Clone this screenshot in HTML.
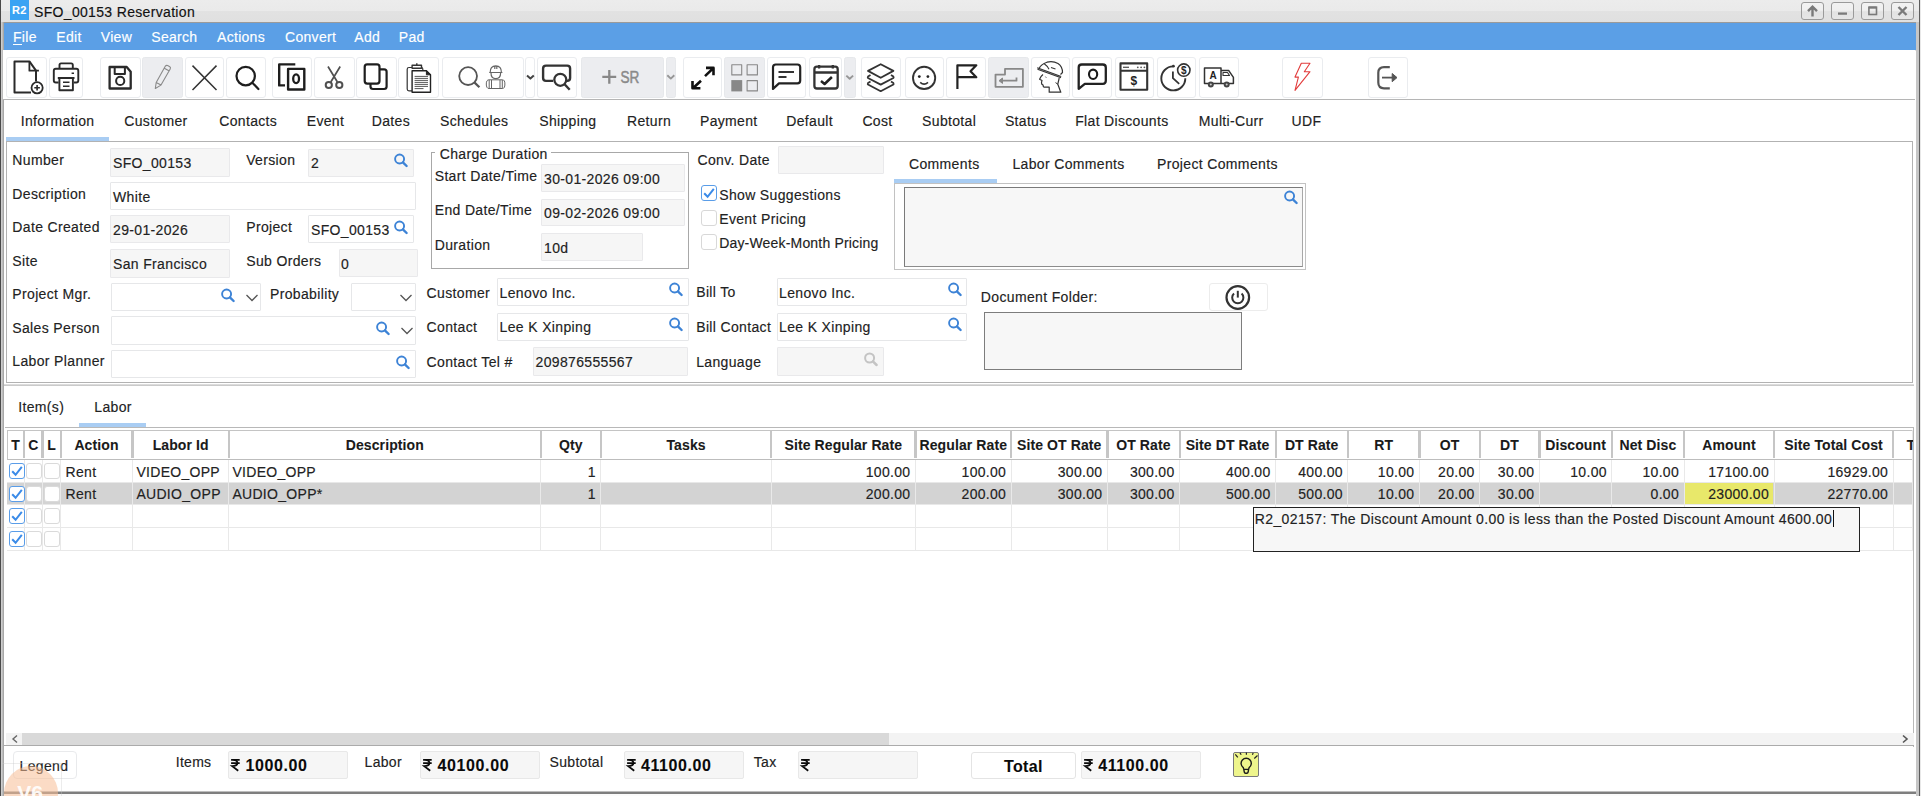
<!DOCTYPE html><html><head><meta charset="utf-8"><style>
html,body{margin:0;padding:0;width:1921px;height:796px;overflow:hidden;background:#fff}
body{position:relative;font-family:"Liberation Sans",sans-serif}
body>div{position:absolute}
.t{white-space:nowrap;-webkit-text-stroke:0.15px currentColor}
</style></head><body>
<div style="left:0px;top:0px;width:1921px;height:22px;background:linear-gradient(#ececec 0%,#eaeaea 50%,#e2e2e2 50%,#e0e0e0 100%)"></div>
<div style="left:10px;top:0px;width:19px;height:20px;background:#3aa3f3"></div>
<div class="t" style="left:12px;top:4.19px;font-size:11px;line-height:13px;font-weight:bold;color:#fff;letter-spacing:0.2px;;-webkit-text-stroke:0.08px currentColor">R2</div>
<div class="t" style="left:34px;top:4.15px;font-size:14px;line-height:16px;font-weight:normal;color:#111;letter-spacing:0.33px;">SFO_00153 Reservation</div>
<div style="left:1801px;top:2px;width:23px;height:17.5px;background:linear-gradient(#f2f2f2,#f0f0f0 45%,#e2e2e2 55%,#e6e6e6);border:1.5px solid #9a9a9a;border-radius:3px;box-sizing:border-box"></div>
<div style="left:1831px;top:2px;width:23px;height:17.5px;background:linear-gradient(#f2f2f2,#f0f0f0 45%,#e2e2e2 55%,#e6e6e6);border:1.5px solid #9a9a9a;border-radius:3px;box-sizing:border-box"></div>
<div style="left:1861px;top:2px;width:23px;height:17.5px;background:linear-gradient(#f2f2f2,#f0f0f0 45%,#e2e2e2 55%,#e6e6e6);border:1.5px solid #9a9a9a;border-radius:3px;box-sizing:border-box"></div>
<div style="left:1891px;top:2px;width:23px;height:17.5px;background:linear-gradient(#f2f2f2,#f0f0f0 45%,#e2e2e2 55%,#e6e6e6);border:1.5px solid #9a9a9a;border-radius:3px;box-sizing:border-box"></div>
<svg style="position:absolute;left:1801px;top:2px;overflow:visible" width="23" height="18" viewBox="0 0 23 18"><path d="M11.5 14.5 V5 M7 9.2 L11.5 4.6 L16 9.2" fill="none" stroke="#7a7a7a" stroke-width="2.4"/></svg>
<svg style="position:absolute;left:1831px;top:2px;overflow:visible" width="23" height="18" viewBox="0 0 23 18"><line x1="7" y1="11.6" x2="16" y2="11.6" stroke="#7a7a7a" stroke-width="2.3"/></svg>
<svg style="position:absolute;left:1861px;top:2px;overflow:visible" width="23" height="18" viewBox="0 0 23 18"><rect x="7.9" y="5.2" width="7.6" height="7.3" fill="none" stroke="#7a7a7a" stroke-width="1.6"/><line x1="7.9" y1="5.6" x2="15.5" y2="5.6" stroke="#7a7a7a" stroke-width="2.2"/></svg>
<svg style="position:absolute;left:1891px;top:2px;overflow:visible" width="23" height="18" viewBox="0 0 23 18"><path d="M7.5 5 L15.5 13 M15.5 5 L7.5 13" stroke="#7a7a7a" stroke-width="2.4"/></svg>
<div style="left:0px;top:0px;width:1px;height:796px;background:#4a4a4a"></div>
<div style="left:1px;top:22px;width:1px;height:774px;background:#cdcdcd"></div>
<div style="left:2px;top:22px;width:1px;height:774px;background:#bdbdbd"></div>
<div style="left:3px;top:22px;width:1px;height:774px;background:#a8a8a8"></div>
<div style="left:1916px;top:22px;width:3px;height:774px;background:#c6c6c6"></div>
<div style="left:1919px;top:0px;width:1px;height:796px;background:#5c5c5c"></div>
<div style="left:1920px;top:0px;width:1px;height:796px;background:#e8e8e8"></div>
<div style="left:4px;top:22px;width:1912px;height:1px;background:#9a9a9a"></div>
<div style="left:4px;top:23px;width:1912px;height:27px;background:#5b9fe6"></div>
<div style="left:3.9px;top:50px;width:1912.1999999999998px;height:1px;background:#e6e2de"></div>
<div class="t" style="left:13px;top:29.05px;font-size:14px;line-height:16px;font-weight:normal;color:#fff;letter-spacing:0.3px;">File</div>
<div class="t" style="left:56.25px;top:29.05px;font-size:14px;line-height:16px;font-weight:normal;color:#fff;letter-spacing:0.3px;">Edit</div>
<div class="t" style="left:100.75px;top:29.05px;font-size:14px;line-height:16px;font-weight:normal;color:#fff;letter-spacing:0.3px;">View</div>
<div class="t" style="left:151.25px;top:29.05px;font-size:14px;line-height:16px;font-weight:normal;color:#fff;letter-spacing:0.3px;">Search</div>
<div class="t" style="left:217px;top:29.05px;font-size:14px;line-height:16px;font-weight:normal;color:#fff;letter-spacing:0.3px;">Actions</div>
<div class="t" style="left:285px;top:29.05px;font-size:14px;line-height:16px;font-weight:normal;color:#fff;letter-spacing:0.3px;">Convert</div>
<div class="t" style="left:354.25px;top:29.05px;font-size:14px;line-height:16px;font-weight:normal;color:#fff;letter-spacing:0.3px;">Add</div>
<div class="t" style="left:398.75px;top:29.05px;font-size:14px;line-height:16px;font-weight:normal;color:#fff;letter-spacing:0.3px;">Pad</div>
<div style="left:12.9px;top:43.9px;width:8.999999999999998px;height:1.2000000000000028px;background:#fff"></div>
<div style="left:3px;top:50px;width:1912px;height:50px;background:#fff;border-bottom:1.5px solid #b5b5b5;box-sizing:border-box"></div>
<div class="t" style="left:20.75px;top:112.75px;font-size:14px;line-height:16px;font-weight:normal;color:#222;letter-spacing:0.33px;">Information</div>
<div class="t" style="left:124.25px;top:112.75px;font-size:14px;line-height:16px;font-weight:normal;color:#222;letter-spacing:0.33px;">Customer</div>
<div class="t" style="left:219.25px;top:112.75px;font-size:14px;line-height:16px;font-weight:normal;color:#222;letter-spacing:0.33px;">Contacts</div>
<div class="t" style="left:306.75px;top:112.75px;font-size:14px;line-height:16px;font-weight:normal;color:#222;letter-spacing:0.33px;">Event</div>
<div class="t" style="left:371.75px;top:112.75px;font-size:14px;line-height:16px;font-weight:normal;color:#222;letter-spacing:0.33px;">Dates</div>
<div class="t" style="left:440px;top:112.75px;font-size:14px;line-height:16px;font-weight:normal;color:#222;letter-spacing:0.33px;">Schedules</div>
<div class="t" style="left:539.25px;top:112.75px;font-size:14px;line-height:16px;font-weight:normal;color:#222;letter-spacing:0.33px;">Shipping</div>
<div class="t" style="left:627px;top:112.75px;font-size:14px;line-height:16px;font-weight:normal;color:#222;letter-spacing:0.33px;">Return</div>
<div class="t" style="left:700px;top:112.75px;font-size:14px;line-height:16px;font-weight:normal;color:#222;letter-spacing:0.33px;">Payment</div>
<div class="t" style="left:786.25px;top:112.75px;font-size:14px;line-height:16px;font-weight:normal;color:#222;letter-spacing:0.33px;">Default</div>
<div class="t" style="left:862.4px;top:112.75px;font-size:14px;line-height:16px;font-weight:normal;color:#222;letter-spacing:0.33px;">Cost</div>
<div class="t" style="left:922.1px;top:112.75px;font-size:14px;line-height:16px;font-weight:normal;color:#222;letter-spacing:0.33px;">Subtotal</div>
<div class="t" style="left:1004.9px;top:112.75px;font-size:14px;line-height:16px;font-weight:normal;color:#222;letter-spacing:0.33px;">Status</div>
<div class="t" style="left:1075.2px;top:112.75px;font-size:14px;line-height:16px;font-weight:normal;color:#222;letter-spacing:0.33px;">Flat Discounts</div>
<div class="t" style="left:1198.8px;top:112.75px;font-size:14px;line-height:16px;font-weight:normal;color:#222;letter-spacing:0.33px;">Multi-Curr</div>
<div class="t" style="left:1291.5px;top:112.75px;font-size:14px;line-height:16px;font-weight:normal;color:#222;letter-spacing:0.33px;">UDF</div>
<div style="left:6px;top:137px;width:103px;height:4px;background:#a9cdf3"></div>
<div style="left:6px;top:141px;width:1907px;height:242px;border:1.2px solid #b2b2b2;box-sizing:border-box"></div>
<div style="left:3.9px;top:384.3px;width:1910.1px;height:1.5px;background:linear-gradient(#e4e4e4,#c2c2c2)"></div>
<div class="t" style="left:12.3px;top:152.15px;font-size:14px;line-height:16px;font-weight:normal;color:#222;letter-spacing:0.35px;">Number</div>
<div class="t" style="left:12.3px;top:185.65px;font-size:14px;line-height:16px;font-weight:normal;color:#222;letter-spacing:0.35px;">Description</div>
<div class="t" style="left:12.3px;top:219.15px;font-size:14px;line-height:16px;font-weight:normal;color:#222;letter-spacing:0.35px;">Date Created</div>
<div class="t" style="left:12.3px;top:252.65px;font-size:14px;line-height:16px;font-weight:normal;color:#222;letter-spacing:0.35px;">Site</div>
<div class="t" style="left:12.3px;top:286.35px;font-size:14px;line-height:16px;font-weight:normal;color:#222;letter-spacing:0.35px;">Project Mgr.</div>
<div class="t" style="left:12.3px;top:320.15px;font-size:14px;line-height:16px;font-weight:normal;color:#222;letter-spacing:0.35px;">Sales Person</div>
<div class="t" style="left:12.3px;top:353.45px;font-size:14px;line-height:16px;font-weight:normal;color:#222;letter-spacing:0.35px;">Labor Planner</div>
<div style="left:110.4px;top:148px;width:119.4px;height:29px;background:#f6f6f6;border:1px solid #e9e9eb;border-radius:1px;box-sizing:border-box"></div>
<div class="t" style="left:113px;top:155.35px;font-size:14px;line-height:16px;font-weight:normal;color:#222;letter-spacing:0.35px;">SFO_00153</div>
<div class="t" style="left:246.2px;top:152.15px;font-size:14px;line-height:16px;font-weight:normal;color:#222;letter-spacing:0.35px;">Version</div>
<div style="left:308.3px;top:148.5px;width:105.5px;height:28.0px;background:#f6f6f6;border:1px solid #e9e9eb;border-radius:1px;box-sizing:border-box"></div>
<div class="t" style="left:311px;top:155.35px;font-size:14px;line-height:16px;font-weight:normal;color:#222;letter-spacing:0.35px;">2</div>
<svg style="position:absolute;left:394px;top:153.5px;overflow:visible" width="14" height="14" viewBox="0 0 14 14"><circle cx="5.6" cy="5.0" r="4.5" fill="none" stroke="#3d83d6" stroke-width="1.9"/><line x1="8.9" y1="8.4" x2="12.6" y2="12.0" stroke="#3d83d6" stroke-width="2.4" stroke-linecap="round"/></svg>
<div style="left:110.4px;top:182.2px;width:305.29999999999995px;height:27.80000000000001px;background:#fff;border:1px solid #e6e7e9;border-radius:1px;box-sizing:border-box"></div>
<div class="t" style="left:113px;top:188.75px;font-size:14px;line-height:16px;font-weight:normal;color:#222;letter-spacing:0.35px;">White</div>
<div style="left:110.4px;top:215.3px;width:119.4px;height:28.099999999999994px;background:#f6f6f6;border:1px solid #e9e9eb;border-radius:1px;box-sizing:border-box"></div>
<div class="t" style="left:113px;top:222.15px;font-size:14px;line-height:16px;font-weight:normal;color:#222;letter-spacing:0.35px;">29-01-2026</div>
<div class="t" style="left:246.2px;top:219.15px;font-size:14px;line-height:16px;font-weight:normal;color:#222;letter-spacing:0.35px;">Project</div>
<div style="left:308.3px;top:215.4px;width:105.5px;height:27.799999999999983px;background:#fff;border:1px solid #e6e7e9;border-radius:1px;box-sizing:border-box"></div>
<div class="t" style="left:311px;top:222.15px;font-size:14px;line-height:16px;font-weight:normal;color:#222;letter-spacing:0.35px;">SFO_00153</div>
<svg style="position:absolute;left:394px;top:220.5px;overflow:visible" width="14" height="14" viewBox="0 0 14 14"><circle cx="5.6" cy="5.0" r="4.5" fill="none" stroke="#3d83d6" stroke-width="1.9"/><line x1="8.9" y1="8.4" x2="12.6" y2="12.0" stroke="#3d83d6" stroke-width="2.4" stroke-linecap="round"/></svg>
<div style="left:110.4px;top:249px;width:119.4px;height:28.5px;background:#f6f6f6;border:1px solid #e9e9eb;border-radius:1px;box-sizing:border-box"></div>
<div class="t" style="left:113px;top:255.85px;font-size:14px;line-height:16px;font-weight:normal;color:#222;letter-spacing:0.35px;">San Francisco</div>
<div class="t" style="left:246.2px;top:252.65px;font-size:14px;line-height:16px;font-weight:normal;color:#222;letter-spacing:0.35px;">Sub Orders</div>
<div style="left:338.5px;top:249.3px;width:79.10000000000002px;height:27.899999999999977px;background:#f6f6f6;border:1px solid #e9e9eb;border-radius:1px;box-sizing:border-box"></div>
<div class="t" style="left:341px;top:255.85px;font-size:14px;line-height:16px;font-weight:normal;color:#222;letter-spacing:0.35px;">0</div>
<div style="left:110.6px;top:282.7px;width:150.4px;height:28.0px;background:#fff;border:1px solid #e6e7e9;border-radius:1px;box-sizing:border-box"></div>
<svg style="position:absolute;left:221px;top:288.5px;overflow:visible" width="14" height="14" viewBox="0 0 14 14"><circle cx="5.6" cy="5.0" r="4.5" fill="none" stroke="#3d83d6" stroke-width="1.9"/><line x1="8.9" y1="8.4" x2="12.6" y2="12.0" stroke="#3d83d6" stroke-width="2.4" stroke-linecap="round"/></svg>
<svg style="position:absolute;left:246px;top:293.5px;overflow:visible" width="12" height="8" viewBox="0 0 12 8"><polyline points="0.5,1 6,6.5 11.5,1" fill="none" stroke="#555" stroke-width="1.3"/></svg>
<div class="t" style="left:270px;top:286.35px;font-size:14px;line-height:16px;font-weight:normal;color:#222;letter-spacing:0.35px;">Probability</div>
<div style="left:350.9px;top:282.7px;width:64.90000000000003px;height:28.0px;background:#fff;border:1px solid #e6e7e9;border-radius:1px;box-sizing:border-box"></div>
<svg style="position:absolute;left:400px;top:293.5px;overflow:visible" width="12" height="8" viewBox="0 0 12 8"><polyline points="0.5,1 6,6.5 11.5,1" fill="none" stroke="#555" stroke-width="1.3"/></svg>
<div style="left:110.6px;top:316.2px;width:305.20000000000005px;height:28.400000000000034px;background:#fff;border:1px solid #e6e7e9;border-radius:1px;box-sizing:border-box"></div>
<svg style="position:absolute;left:375.5px;top:322px;overflow:visible" width="14" height="14" viewBox="0 0 14 14"><circle cx="5.6" cy="5.0" r="4.5" fill="none" stroke="#3d83d6" stroke-width="1.9"/><line x1="8.9" y1="8.4" x2="12.6" y2="12.0" stroke="#3d83d6" stroke-width="2.4" stroke-linecap="round"/></svg>
<svg style="position:absolute;left:400.5px;top:327px;overflow:visible" width="12" height="8" viewBox="0 0 12 8"><polyline points="0.5,1 6,6.5 11.5,1" fill="none" stroke="#555" stroke-width="1.3"/></svg>
<div style="left:110.6px;top:350.3px;width:305.20000000000005px;height:27.399999999999977px;background:#fff;border:1px solid #e6e7e9;border-radius:1px;box-sizing:border-box"></div>
<svg style="position:absolute;left:396px;top:355.5px;overflow:visible" width="14" height="14" viewBox="0 0 14 14"><circle cx="5.6" cy="5.0" r="4.5" fill="none" stroke="#3d83d6" stroke-width="1.9"/><line x1="8.9" y1="8.4" x2="12.6" y2="12.0" stroke="#3d83d6" stroke-width="2.4" stroke-linecap="round"/></svg>
<div style="left:431.3px;top:152.4px;width:257.40000000000003px;height:116.29999999999998px;border:1.3px solid #a8a8a8;box-sizing:border-box"></div>
<div style="left:434.5px;top:150px;width:116.5px;height:6px;background:#fff"></div>
<div class="t" style="left:439.7px;top:146.05px;font-size:14px;line-height:16px;font-weight:normal;color:#222;letter-spacing:0.35px;">Charge Duration</div>
<div class="t" style="left:434.7px;top:167.55px;font-size:14px;line-height:16px;font-weight:normal;color:#222;letter-spacing:0.35px;">Start Date/Time</div>
<div style="left:541px;top:164px;width:143.79999999999995px;height:27.599999999999994px;background:#f6f6f6;border:1px solid #e9e9eb;border-radius:1px;box-sizing:border-box"></div>
<div class="t" style="left:544px;top:170.55px;font-size:14px;line-height:16px;font-weight:normal;color:#222;letter-spacing:0.35px;">30-01-2026 09:00</div>
<div class="t" style="left:434.7px;top:201.95px;font-size:14px;line-height:16px;font-weight:normal;color:#222;letter-spacing:0.35px;">End Date/Time</div>
<div style="left:541px;top:198.8px;width:143.79999999999995px;height:27.599999999999994px;background:#f6f6f6;border:1px solid #e9e9eb;border-radius:1px;box-sizing:border-box"></div>
<div class="t" style="left:544px;top:205.25px;font-size:14px;line-height:16px;font-weight:normal;color:#222;letter-spacing:0.35px;">09-02-2026 09:00</div>
<div class="t" style="left:434.7px;top:236.95px;font-size:14px;line-height:16px;font-weight:normal;color:#222;letter-spacing:0.35px;">Duration</div>
<div style="left:541px;top:233.4px;width:101.70000000000005px;height:28.099999999999994px;background:#f6f6f6;border:1px solid #e9e9eb;border-radius:1px;box-sizing:border-box"></div>
<div class="t" style="left:544px;top:240.15px;font-size:14px;line-height:16px;font-weight:normal;color:#222;letter-spacing:0.35px;">10d</div>
<div class="t" style="left:697.5px;top:152.05px;font-size:14px;line-height:16px;font-weight:normal;color:#222;letter-spacing:0.35px;">Conv. Date</div>
<div style="left:778.2px;top:146.2px;width:105.59999999999991px;height:27.5px;background:#f6f6f6;border:1px solid #e9e9eb;border-radius:1px;box-sizing:border-box"></div>
<div style="left:701.4px;top:185.4px;width:16.0px;height:16.0px;background:#fff;border:1.3px solid #5a9de8;border-radius:3px;box-sizing:border-box"></div>
<svg style="position:absolute;left:701.4px;top:185.4px;overflow:visible" width="16" height="16" viewBox="0 0 16 16"><path d="M3.2 8.2 L6.6 11.8 L12.8 3.8" fill="none" stroke="#3b8be8" stroke-width="2"/></svg>
<div class="t" style="left:719.2px;top:186.75px;font-size:14px;line-height:16px;font-weight:normal;color:#222;letter-spacing:0.35px;">Show Suggestions</div>
<div style="left:701.4px;top:209.7px;width:16.0px;height:16.0px;background:#fff;border:1.2px solid #d8d8d8;border-radius:3px;box-sizing:border-box"></div>
<div class="t" style="left:719.2px;top:210.65px;font-size:14px;line-height:16px;font-weight:normal;color:#222;letter-spacing:0.35px;">Event Pricing</div>
<div style="left:701.4px;top:233.6px;width:16.0px;height:16.0px;background:#fff;border:1.2px solid #d8d8d8;border-radius:3px;box-sizing:border-box"></div>
<div class="t" style="left:719.2px;top:234.75px;font-size:14px;line-height:16px;font-weight:normal;color:#222;letter-spacing:0.18px;">Day-Week-Month Pricing</div>
<div class="t" style="left:909px;top:155.55px;font-size:14px;line-height:16px;font-weight:normal;color:#222;letter-spacing:0.35px;">Comments</div>
<div class="t" style="left:1012.4px;top:155.55px;font-size:14px;line-height:16px;font-weight:normal;color:#222;letter-spacing:0.35px;">Labor Comments</div>
<div class="t" style="left:1157px;top:155.55px;font-size:14px;line-height:16px;font-weight:normal;color:#222;letter-spacing:0.35px;">Project Comments</div>
<div style="left:894px;top:179px;width:103px;height:4.199999999999989px;background:#a9cdf3"></div>
<div style="left:894px;top:183px;width:411.5999999999999px;height:87.19999999999999px;border:1.3px solid #c2c2c2;box-sizing:border-box"></div>
<div style="left:904px;top:186.7px;width:398.5999999999999px;height:80.80000000000001px;background:#f7f7f7;border:1.6px solid #7a7a7a;border-right:1.2px solid #a8a8a8;border-bottom:1.3px solid #8c8c8c;box-sizing:border-box"></div>
<svg style="position:absolute;left:1284px;top:191.3px;overflow:visible" width="14" height="14" viewBox="0 0 14 14"><circle cx="5.6" cy="5.0" r="4.5" fill="none" stroke="#3d83d6" stroke-width="1.9"/><line x1="8.9" y1="8.4" x2="12.6" y2="12.0" stroke="#3d83d6" stroke-width="2.4" stroke-linecap="round"/></svg>
<div class="t" style="left:426.6px;top:284.75px;font-size:14px;line-height:16px;font-weight:normal;color:#222;letter-spacing:0.35px;">Customer</div>
<div style="left:497.3px;top:278.2px;width:191.40000000000003px;height:27.400000000000034px;background:#fff;border:1px solid #e6e7e9;border-radius:1px;box-sizing:border-box"></div>
<div class="t" style="left:499.6px;top:285.15px;font-size:14px;line-height:16px;font-weight:normal;color:#222;letter-spacing:0.35px;">Lenovo Inc.</div>
<svg style="position:absolute;left:668.6px;top:283px;overflow:visible" width="14" height="14" viewBox="0 0 14 14"><circle cx="5.6" cy="5.0" r="4.5" fill="none" stroke="#3d83d6" stroke-width="1.9"/><line x1="8.9" y1="8.4" x2="12.6" y2="12.0" stroke="#3d83d6" stroke-width="2.4" stroke-linecap="round"/></svg>
<div class="t" style="left:426.6px;top:318.75px;font-size:14px;line-height:16px;font-weight:normal;color:#222;letter-spacing:0.35px;">Contact</div>
<div style="left:497.3px;top:313px;width:191.40000000000003px;height:27.5px;background:#fff;border:1px solid #e6e7e9;border-radius:1px;box-sizing:border-box"></div>
<div class="t" style="left:499.6px;top:319.45px;font-size:14px;line-height:16px;font-weight:normal;color:#222;letter-spacing:0.35px;">Lee K Xinping</div>
<svg style="position:absolute;left:668.6px;top:317.7px;overflow:visible" width="14" height="14" viewBox="0 0 14 14"><circle cx="5.6" cy="5.0" r="4.5" fill="none" stroke="#3d83d6" stroke-width="1.9"/><line x1="8.9" y1="8.4" x2="12.6" y2="12.0" stroke="#3d83d6" stroke-width="2.4" stroke-linecap="round"/></svg>
<div class="t" style="left:426.6px;top:353.55px;font-size:14px;line-height:16px;font-weight:normal;color:#222;letter-spacing:0.35px;">Contact Tel #</div>
<div style="left:533.2px;top:347.2px;width:154.39999999999998px;height:28.400000000000034px;background:#f6f6f6;border:1px solid #e9e9eb;border-radius:1px;box-sizing:border-box"></div>
<div class="t" style="left:535.5px;top:354.35px;font-size:14px;line-height:16px;font-weight:normal;color:#222;letter-spacing:0.35px;">209876555567</div>
<div class="t" style="left:696.2px;top:284.35px;font-size:14px;line-height:16px;font-weight:normal;color:#222;letter-spacing:0.35px;">Bill To</div>
<div style="left:776.5px;top:278.2px;width:190.89999999999998px;height:27.400000000000034px;background:#fff;border:1px solid #e6e7e9;border-radius:1px;box-sizing:border-box"></div>
<div class="t" style="left:779px;top:285.15px;font-size:14px;line-height:16px;font-weight:normal;color:#222;letter-spacing:0.35px;">Lenovo Inc.</div>
<svg style="position:absolute;left:948.3px;top:283px;overflow:visible" width="14" height="14" viewBox="0 0 14 14"><circle cx="5.6" cy="5.0" r="4.5" fill="none" stroke="#3d83d6" stroke-width="1.9"/><line x1="8.9" y1="8.4" x2="12.6" y2="12.0" stroke="#3d83d6" stroke-width="2.4" stroke-linecap="round"/></svg>
<div class="t" style="left:696.2px;top:318.75px;font-size:14px;line-height:16px;font-weight:normal;color:#222;letter-spacing:0.35px;">Bill Contact</div>
<div style="left:776.5px;top:313px;width:190.89999999999998px;height:27.5px;background:#fff;border:1px solid #e6e7e9;border-radius:1px;box-sizing:border-box"></div>
<div class="t" style="left:779px;top:319.45px;font-size:14px;line-height:16px;font-weight:normal;color:#222;letter-spacing:0.35px;">Lee K Xinping</div>
<svg style="position:absolute;left:948.3px;top:317.7px;overflow:visible" width="14" height="14" viewBox="0 0 14 14"><circle cx="5.6" cy="5.0" r="4.5" fill="none" stroke="#3d83d6" stroke-width="1.9"/><line x1="8.9" y1="8.4" x2="12.6" y2="12.0" stroke="#3d83d6" stroke-width="2.4" stroke-linecap="round"/></svg>
<div class="t" style="left:696.2px;top:353.55px;font-size:14px;line-height:16px;font-weight:normal;color:#222;letter-spacing:0.35px;">Language</div>
<div style="left:776.5px;top:347.2px;width:107.39999999999998px;height:28.400000000000034px;background:#f6f6f6;border:1px solid #e9e9eb;border-radius:1px;box-sizing:border-box"></div>
<svg style="position:absolute;left:864px;top:352.5px;overflow:visible" width="14" height="14" viewBox="0 0 14 14"><circle cx="5.6" cy="5.0" r="4.5" fill="none" stroke="#c4c4c4" stroke-width="2"/><line x1="8.9" y1="8.4" x2="12.6" y2="12.0" stroke="#c4c4c4" stroke-width="2.5" stroke-linecap="round"/></svg>
<div class="t" style="left:980.8px;top:289.15px;font-size:14px;line-height:16px;font-weight:normal;color:#222;letter-spacing:0.35px;">Document Folder:</div>
<div style="left:1209px;top:283px;width:58.5px;height:27.5px;background:#fff;border:1px solid #ececec;border-radius:3px;box-sizing:border-box"></div>
<svg style="position:absolute;left:1225px;top:285px;overflow:visible" width="26" height="26" viewBox="0 0 26 26"><circle cx="12.8" cy="12.5" r="11.3" fill="none" stroke="#333" stroke-width="2.2"/><path d="M9 8.6 A5.6 5.6 0 1 0 16.6 8.6" fill="none" stroke="#333" stroke-width="2"/><line x1="12.8" y1="5.8" x2="12.8" y2="12.6" stroke="#333" stroke-width="2"/></svg>
<div style="left:984.2px;top:312.4px;width:257.70000000000005px;height:57.200000000000045px;background:#f7f7f7;border:1.5px solid #7d7d7d;box-sizing:border-box"></div>
<div class="t" style="left:18.2px;top:399.15px;font-size:14px;line-height:16px;font-weight:normal;color:#222;letter-spacing:0.35px;">Item(s)</div>
<div class="t" style="left:94.3px;top:399.15px;font-size:14px;line-height:16px;font-weight:normal;color:#222;letter-spacing:0.35px;">Labor</div>
<div style="left:79px;top:423.2px;width:67.30000000000001px;height:3.8000000000000114px;background:#a9cdf3"></div>
<div style="left:5px;top:427px;width:1909px;height:320px;border-top:1.5px solid #b8b8b8;border-right:1.3px solid #b8b8b8;box-sizing:border-box"></div>
<div style="left:6.8px;top:430.4px;width:1906.0px;height:30.0px;background:#fff;border-top:1.3px solid #c4c4c4;border-bottom:1.6px solid #bdbdbd;border-left:1.3px solid #c4c4c4;box-sizing:border-box"></div>
<div style="left:6.8px;top:482.7px;width:1906.0px;height:22.19999999999999px;background:#d3d3d3"></div>
<div style="left:1684.5px;top:482.7px;width:88.0px;height:22.19999999999999px;background:#e8e86a"></div>
<div style="left:6.8px;top:504.4px;width:1906.0px;height:1.0px;background:#e8e8e8"></div>
<div style="left:6.8px;top:527.2px;width:1906.0px;height:1.0px;background:#e8e8e8"></div>
<div style="left:6.8px;top:549.9px;width:1906.0px;height:1.0px;background:#e8e8e8"></div>
<div style="left:6.8px;top:482.2px;width:1906.0px;height:1.0px;background:#e8e8e8"></div>
<div style="left:23.8px;top:460.4px;width:1.0px;height:90.0px;background:#e9e9e9"></div>
<div style="left:23.3px;top:431.4px;width:2.1999999999999993px;height:27.0px;background:#c6c6c6"></div>
<div style="left:41.9px;top:460.4px;width:1.0px;height:90.0px;background:#e9e9e9"></div>
<div style="left:41.4px;top:431.4px;width:2.200000000000003px;height:27.0px;background:#c6c6c6"></div>
<div style="left:60.1px;top:460.4px;width:1.0px;height:90.0px;background:#e9e9e9"></div>
<div style="left:59.6px;top:431.4px;width:2.200000000000003px;height:27.0px;background:#c6c6c6"></div>
<div style="left:131.9px;top:460.4px;width:1.0px;height:90.0px;background:#e9e9e9"></div>
<div style="left:131.4px;top:431.4px;width:2.1999999999999886px;height:27.0px;background:#c6c6c6"></div>
<div style="left:228.4px;top:460.4px;width:1.0px;height:90.0px;background:#e9e9e9"></div>
<div style="left:227.9px;top:431.4px;width:2.1999999999999886px;height:27.0px;background:#c6c6c6"></div>
<div style="left:540.2px;top:460.4px;width:1.0px;height:90.0px;background:#e9e9e9"></div>
<div style="left:539.7px;top:431.4px;width:2.2000000000000455px;height:27.0px;background:#c6c6c6"></div>
<div style="left:600.4px;top:460.4px;width:1.0px;height:90.0px;background:#e9e9e9"></div>
<div style="left:599.9px;top:431.4px;width:2.2000000000000455px;height:27.0px;background:#c6c6c6"></div>
<div style="left:770.8px;top:460.4px;width:1.0px;height:90.0px;background:#e9e9e9"></div>
<div style="left:770.3px;top:431.4px;width:2.2000000000000455px;height:27.0px;background:#c6c6c6"></div>
<div style="left:914.9px;top:460.4px;width:1.0px;height:90.0px;background:#e9e9e9"></div>
<div style="left:914.4px;top:431.4px;width:2.2000000000000455px;height:27.0px;background:#c6c6c6"></div>
<div style="left:1010.7px;top:460.4px;width:1.0px;height:90.0px;background:#e9e9e9"></div>
<div style="left:1010.2px;top:431.4px;width:2.2000000000000455px;height:27.0px;background:#c6c6c6"></div>
<div style="left:1106.9px;top:460.4px;width:1.0px;height:90.0px;background:#e9e9e9"></div>
<div style="left:1106.4px;top:431.4px;width:2.2000000000000455px;height:27.0px;background:#c6c6c6"></div>
<div style="left:1179.0px;top:460.4px;width:1.0px;height:90.0px;background:#e9e9e9"></div>
<div style="left:1178.5px;top:431.4px;width:2.2000000000000455px;height:27.0px;background:#c6c6c6"></div>
<div style="left:1275.0px;top:460.4px;width:1.0px;height:90.0px;background:#e9e9e9"></div>
<div style="left:1274.5px;top:431.4px;width:2.2000000000000455px;height:27.0px;background:#c6c6c6"></div>
<div style="left:1347.4px;top:460.4px;width:1.0px;height:90.0px;background:#e9e9e9"></div>
<div style="left:1346.9px;top:431.4px;width:2.2000000000000455px;height:27.0px;background:#c6c6c6"></div>
<div style="left:1418.9px;top:460.4px;width:1.0px;height:90.0px;background:#e9e9e9"></div>
<div style="left:1418.4px;top:431.4px;width:2.2000000000000455px;height:27.0px;background:#c6c6c6"></div>
<div style="left:1479.1px;top:460.4px;width:1.0px;height:90.0px;background:#e9e9e9"></div>
<div style="left:1478.6px;top:431.4px;width:2.2000000000000455px;height:27.0px;background:#c6c6c6"></div>
<div style="left:1538.9px;top:460.4px;width:1.0px;height:90.0px;background:#e9e9e9"></div>
<div style="left:1538.4px;top:431.4px;width:2.2000000000000455px;height:27.0px;background:#c6c6c6"></div>
<div style="left:1611.3px;top:460.4px;width:1.0px;height:90.0px;background:#e9e9e9"></div>
<div style="left:1610.8px;top:431.4px;width:2.2000000000000455px;height:27.0px;background:#c6c6c6"></div>
<div style="left:1683.5px;top:460.4px;width:1.0px;height:90.0px;background:#e9e9e9"></div>
<div style="left:1683px;top:431.4px;width:2.2000000000000455px;height:27.0px;background:#c6c6c6"></div>
<div style="left:1773.5px;top:460.4px;width:1.0px;height:90.0px;background:#e9e9e9"></div>
<div style="left:1773px;top:431.4px;width:2.2000000000000455px;height:27.0px;background:#c6c6c6"></div>
<div style="left:1892.7px;top:460.4px;width:1.0px;height:90.0px;background:#e9e9e9"></div>
<div style="left:1892.2px;top:431.4px;width:2.2000000000000455px;height:27.0px;background:#c6c6c6"></div>
<div style="left:1912px;top:430.4px;width:1px;height:120.0px;background:#e6e6e6"></div>
<div class="t" style="left:6.8px;width:17.5px;text-align:center;top:437.05px;font-size:14px;line-height:16px;font-weight:bold;color:#1a1a1a;letter-spacing:0.1px;;-webkit-text-stroke:0.08px currentColor">T</div>
<div class="t" style="left:24.3px;width:18.099999999999998px;text-align:center;top:437.05px;font-size:14px;line-height:16px;font-weight:bold;color:#1a1a1a;letter-spacing:0.1px;;-webkit-text-stroke:0.08px currentColor">C</div>
<div class="t" style="left:42.4px;width:18.200000000000003px;text-align:center;top:437.05px;font-size:14px;line-height:16px;font-weight:bold;color:#1a1a1a;letter-spacing:0.1px;;-webkit-text-stroke:0.08px currentColor">L</div>
<div class="t" style="left:60.6px;width:71.80000000000001px;text-align:center;top:437.05px;font-size:14px;line-height:16px;font-weight:bold;color:#1a1a1a;letter-spacing:0.1px;;-webkit-text-stroke:0.08px currentColor">Action</div>
<div class="t" style="left:132.4px;width:96.5px;text-align:center;top:437.05px;font-size:14px;line-height:16px;font-weight:bold;color:#1a1a1a;letter-spacing:0.1px;;-webkit-text-stroke:0.08px currentColor">Labor Id</div>
<div class="t" style="left:228.9px;width:311.80000000000007px;text-align:center;top:437.05px;font-size:14px;line-height:16px;font-weight:bold;color:#1a1a1a;letter-spacing:0.1px;;-webkit-text-stroke:0.08px currentColor">Description</div>
<div class="t" style="left:540.7px;width:60.19999999999993px;text-align:center;top:437.05px;font-size:14px;line-height:16px;font-weight:bold;color:#1a1a1a;letter-spacing:0.1px;;-webkit-text-stroke:0.08px currentColor">Qty</div>
<div class="t" style="left:600.9px;width:170.39999999999998px;text-align:center;top:437.05px;font-size:14px;line-height:16px;font-weight:bold;color:#1a1a1a;letter-spacing:0.1px;;-webkit-text-stroke:0.08px currentColor">Tasks</div>
<div class="t" style="left:771.3px;width:144.10000000000002px;text-align:center;top:437.05px;font-size:14px;line-height:16px;font-weight:bold;color:#1a1a1a;letter-spacing:0.1px;;-webkit-text-stroke:0.08px currentColor">Site Regular Rate</div>
<div class="t" style="left:915.4px;width:95.80000000000007px;text-align:center;top:437.05px;font-size:14px;line-height:16px;font-weight:bold;color:#1a1a1a;letter-spacing:0.1px;;-webkit-text-stroke:0.08px currentColor">Regular Rate</div>
<div class="t" style="left:1011.2px;width:96.20000000000005px;text-align:center;top:437.05px;font-size:14px;line-height:16px;font-weight:bold;color:#1a1a1a;letter-spacing:0.1px;;-webkit-text-stroke:0.08px currentColor">Site OT Rate</div>
<div class="t" style="left:1107.4px;width:72.09999999999991px;text-align:center;top:437.05px;font-size:14px;line-height:16px;font-weight:bold;color:#1a1a1a;letter-spacing:0.1px;;-webkit-text-stroke:0.08px currentColor">OT Rate</div>
<div class="t" style="left:1179.5px;width:96.0px;text-align:center;top:437.05px;font-size:14px;line-height:16px;font-weight:bold;color:#1a1a1a;letter-spacing:0.1px;;-webkit-text-stroke:0.08px currentColor">Site DT Rate</div>
<div class="t" style="left:1275.5px;width:72.40000000000009px;text-align:center;top:437.05px;font-size:14px;line-height:16px;font-weight:bold;color:#1a1a1a;letter-spacing:0.1px;;-webkit-text-stroke:0.08px currentColor">DT Rate</div>
<div class="t" style="left:1347.9px;width:71.5px;text-align:center;top:437.05px;font-size:14px;line-height:16px;font-weight:bold;color:#1a1a1a;letter-spacing:0.1px;;-webkit-text-stroke:0.08px currentColor">RT</div>
<div class="t" style="left:1419.4px;width:60.19999999999982px;text-align:center;top:437.05px;font-size:14px;line-height:16px;font-weight:bold;color:#1a1a1a;letter-spacing:0.1px;;-webkit-text-stroke:0.08px currentColor">OT</div>
<div class="t" style="left:1479.6px;width:59.80000000000018px;text-align:center;top:437.05px;font-size:14px;line-height:16px;font-weight:bold;color:#1a1a1a;letter-spacing:0.1px;;-webkit-text-stroke:0.08px currentColor">DT</div>
<div class="t" style="left:1539.4px;width:72.39999999999986px;text-align:center;top:437.05px;font-size:14px;line-height:16px;font-weight:bold;color:#1a1a1a;letter-spacing:0.1px;;-webkit-text-stroke:0.08px currentColor">Discount</div>
<div class="t" style="left:1611.8px;width:72.20000000000005px;text-align:center;top:437.05px;font-size:14px;line-height:16px;font-weight:bold;color:#1a1a1a;letter-spacing:0.1px;;-webkit-text-stroke:0.08px currentColor">Net Disc</div>
<div class="t" style="left:1684px;width:90px;text-align:center;top:437.05px;font-size:14px;line-height:16px;font-weight:bold;color:#1a1a1a;letter-spacing:0.1px;;-webkit-text-stroke:0.08px currentColor">Amount</div>
<div class="t" style="left:1774px;width:119.20000000000005px;text-align:center;top:437.05px;font-size:14px;line-height:16px;font-weight:bold;color:#1a1a1a;letter-spacing:0.1px;;-webkit-text-stroke:0.08px currentColor">Site Total Cost</div>
<div style="left:1894px;top:436px;width:18.5px;height:18px;overflow:hidden"><div class="t" style="position:absolute;left:12.8px;top:0.9px;font-size:14px;line-height:16px;font-weight:bold;color:#1a1a1a;-webkit-text-stroke:0.08px currentColor">T</div></div>
<div style="left:8.5px;top:462.7px;width:16.0px;height:16.0px;background:#fff;border:1.3px solid #5a9de8;border-radius:3px;box-sizing:border-box"></div>
<svg style="position:absolute;left:8.5px;top:462.7px;overflow:visible" width="16" height="16" viewBox="0 0 16 16"><path d="M3.2 8.2 L6.6 11.8 L12.8 3.8" fill="none" stroke="#3b8be8" stroke-width="2"/></svg>
<div style="left:26.2px;top:462.7px;width:16.000000000000004px;height:16.0px;background:#fff;border:1.2px solid #dadada;border-radius:3px;box-sizing:border-box"></div>
<div style="left:44.3px;top:462.7px;width:16.0px;height:16.0px;background:#fff;border:1.2px solid #dadada;border-radius:3px;box-sizing:border-box"></div>
<div class="t" style="left:65.6px;top:463.65px;font-size:14px;line-height:16px;font-weight:normal;color:#222;letter-spacing:0.3px;">Rent</div>
<div class="t" style="left:136.4px;top:463.65px;font-size:14px;line-height:16px;font-weight:normal;color:#222;letter-spacing:0.3px;">VIDEO_OPP</div>
<div class="t" style="left:232.4px;top:463.65px;font-size:14px;line-height:16px;font-weight:normal;color:#222;letter-spacing:0.3px;">VIDEO_OPP</div>
<div class="t" style="right:1325.1px;top:463.65px;font-size:14px;line-height:16px;font-weight:normal;color:#222;letter-spacing:0.3px;">1</div>
<div class="t" style="right:1010.6px;top:463.65px;font-size:14px;line-height:16px;font-weight:normal;color:#222;letter-spacing:0.3px;">100.00</div>
<div class="t" style="right:914.8px;top:463.65px;font-size:14px;line-height:16px;font-weight:normal;color:#222;letter-spacing:0.3px;">100.00</div>
<div class="t" style="right:818.5999999999999px;top:463.65px;font-size:14px;line-height:16px;font-weight:normal;color:#222;letter-spacing:0.3px;">300.00</div>
<div class="t" style="right:746.5px;top:463.65px;font-size:14px;line-height:16px;font-weight:normal;color:#222;letter-spacing:0.3px;">300.00</div>
<div class="t" style="right:650.5px;top:463.65px;font-size:14px;line-height:16px;font-weight:normal;color:#222;letter-spacing:0.3px;">400.00</div>
<div class="t" style="right:578.0999999999999px;top:463.65px;font-size:14px;line-height:16px;font-weight:normal;color:#222;letter-spacing:0.3px;">400.00</div>
<div class="t" style="right:506.5999999999999px;top:463.65px;font-size:14px;line-height:16px;font-weight:normal;color:#222;letter-spacing:0.3px;">10.00</div>
<div class="t" style="right:446.4000000000001px;top:463.65px;font-size:14px;line-height:16px;font-weight:normal;color:#222;letter-spacing:0.3px;">20.00</div>
<div class="t" style="right:386.5999999999999px;top:463.65px;font-size:14px;line-height:16px;font-weight:normal;color:#222;letter-spacing:0.3px;">30.00</div>
<div class="t" style="right:314.20000000000005px;top:463.65px;font-size:14px;line-height:16px;font-weight:normal;color:#222;letter-spacing:0.3px;">10.00</div>
<div class="t" style="right:242px;top:463.65px;font-size:14px;line-height:16px;font-weight:normal;color:#222;letter-spacing:0.3px;">10.00</div>
<div class="t" style="right:152px;top:463.65px;font-size:14px;line-height:16px;font-weight:normal;color:#222;letter-spacing:0.3px;">17100.00</div>
<div class="t" style="right:32.799999999999955px;top:463.65px;font-size:14px;line-height:16px;font-weight:normal;color:#222;letter-spacing:0.3px;">16929.00</div>
<div style="left:8.5px;top:486.0px;width:16.0px;height:16.0px;background:#fff;border:1.3px solid #5a9de8;border-radius:3px;box-sizing:border-box"></div>
<svg style="position:absolute;left:8.5px;top:486.0px;overflow:visible" width="16" height="16" viewBox="0 0 16 16"><path d="M3.2 8.2 L6.6 11.8 L12.8 3.8" fill="none" stroke="#3b8be8" stroke-width="2"/></svg>
<div style="left:26.2px;top:486.0px;width:16.000000000000004px;height:16.0px;background:#fff;border:1.2px solid #dadada;border-radius:3px;box-sizing:border-box"></div>
<div style="left:44.3px;top:486.0px;width:16.0px;height:16.0px;background:#fff;border:1.2px solid #dadada;border-radius:3px;box-sizing:border-box"></div>
<div class="t" style="left:65.6px;top:486.45px;font-size:14px;line-height:16px;font-weight:normal;color:#222;letter-spacing:0.3px;">Rent</div>
<div class="t" style="left:136.4px;top:486.45px;font-size:14px;line-height:16px;font-weight:normal;color:#222;letter-spacing:0.3px;">AUDIO_OPP</div>
<div class="t" style="left:232.4px;top:486.45px;font-size:14px;line-height:16px;font-weight:normal;color:#222;letter-spacing:0.3px;">AUDIO_OPP*</div>
<div class="t" style="right:1325.1px;top:486.45px;font-size:14px;line-height:16px;font-weight:normal;color:#222;letter-spacing:0.3px;">1</div>
<div class="t" style="right:1010.6px;top:486.45px;font-size:14px;line-height:16px;font-weight:normal;color:#222;letter-spacing:0.3px;">200.00</div>
<div class="t" style="right:914.8px;top:486.45px;font-size:14px;line-height:16px;font-weight:normal;color:#222;letter-spacing:0.3px;">200.00</div>
<div class="t" style="right:818.5999999999999px;top:486.45px;font-size:14px;line-height:16px;font-weight:normal;color:#222;letter-spacing:0.3px;">300.00</div>
<div class="t" style="right:746.5px;top:486.45px;font-size:14px;line-height:16px;font-weight:normal;color:#222;letter-spacing:0.3px;">300.00</div>
<div class="t" style="right:650.5px;top:486.45px;font-size:14px;line-height:16px;font-weight:normal;color:#222;letter-spacing:0.3px;">500.00</div>
<div class="t" style="right:578.0999999999999px;top:486.45px;font-size:14px;line-height:16px;font-weight:normal;color:#222;letter-spacing:0.3px;">500.00</div>
<div class="t" style="right:506.5999999999999px;top:486.45px;font-size:14px;line-height:16px;font-weight:normal;color:#222;letter-spacing:0.3px;">10.00</div>
<div class="t" style="right:446.4000000000001px;top:486.45px;font-size:14px;line-height:16px;font-weight:normal;color:#222;letter-spacing:0.3px;">20.00</div>
<div class="t" style="right:386.5999999999999px;top:486.45px;font-size:14px;line-height:16px;font-weight:normal;color:#222;letter-spacing:0.3px;">30.00</div>
<div class="t" style="right:242px;top:486.45px;font-size:14px;line-height:16px;font-weight:normal;color:#222;letter-spacing:0.3px;">0.00</div>
<div class="t" style="right:152px;top:486.45px;font-size:14px;line-height:16px;font-weight:normal;color:#222;letter-spacing:0.3px;">23000.00</div>
<div class="t" style="right:32.799999999999955px;top:486.45px;font-size:14px;line-height:16px;font-weight:normal;color:#222;letter-spacing:0.3px;">22770.00</div>
<div style="left:8.5px;top:508.2px;width:16.0px;height:16.000000000000057px;background:#fff;border:1.3px solid #5a9de8;border-radius:3px;box-sizing:border-box"></div>
<svg style="position:absolute;left:8.5px;top:508.2px;overflow:visible" width="16" height="16" viewBox="0 0 16 16"><path d="M3.2 8.2 L6.6 11.8 L12.8 3.8" fill="none" stroke="#3b8be8" stroke-width="2"/></svg>
<div style="left:26.2px;top:508.2px;width:16.000000000000004px;height:15.999999999999943px;background:#fff;border:1.2px solid #dadada;border-radius:3px;box-sizing:border-box"></div>
<div style="left:44.3px;top:508.2px;width:16.0px;height:15.999999999999943px;background:#fff;border:1.2px solid #dadada;border-radius:3px;box-sizing:border-box"></div>
<div style="left:8.5px;top:531.0px;width:16.0px;height:16.0px;background:#fff;border:1.3px solid #5a9de8;border-radius:3px;box-sizing:border-box"></div>
<svg style="position:absolute;left:8.5px;top:531.0px;overflow:visible" width="16" height="16" viewBox="0 0 16 16"><path d="M3.2 8.2 L6.6 11.8 L12.8 3.8" fill="none" stroke="#3b8be8" stroke-width="2"/></svg>
<div style="left:26.2px;top:531.0px;width:16.000000000000004px;height:16.0px;background:#fff;border:1.2px solid #dadada;border-radius:3px;box-sizing:border-box"></div>
<div style="left:44.3px;top:531.0px;width:16.0px;height:16.0px;background:#fff;border:1.2px solid #dadada;border-radius:3px;box-sizing:border-box"></div>
<div style="left:1253.1px;top:507px;width:606.9000000000001px;height:45px;background:#f7f7f7;border:1.5px solid #222;box-sizing:border-box"></div>
<div class="t" style="left:1254.8px;top:510.95px;font-size:14px;line-height:16px;font-weight:normal;color:#222;letter-spacing:0.38px;">R2_02157: The Discount Amount 0.00 is less than the Posted Discount Amount 4600.00</div>
<div style="left:1833.2px;top:510px;width:1.2000000000000455px;height:17px;background:#111"></div>
<div style="left:6px;top:732.8px;width:1908px;height:12.0px;background:#f3f3f3"></div>
<div style="left:22px;top:732.8px;width:867px;height:12.0px;background:#d9d9d9"></div>
<svg style="position:absolute;left:10px;top:734px;overflow:visible" width="10" height="10" viewBox="0 0 10 10"><polyline points="7,1.5 3,5 7,8.5" fill="none" stroke="#666" stroke-width="1.4"/></svg>
<svg style="position:absolute;left:1900px;top:734px;overflow:visible" width="10" height="10" viewBox="0 0 10 10"><polyline points="3,1.5 7,5 3,8.5" fill="none" stroke="#555" stroke-width="1.6"/></svg>
<div style="left:4px;top:744.8px;width:1910px;height:1.5px;background:#ababab"></div>
<div style="left:12.5px;top:751.2px;width:64.8px;height:27.399999999999977px;background:#fff;border:1px solid #e9eaec;border-radius:4px;box-sizing:border-box"></div>
<div class="t" style="left:19.5px;top:757.95px;font-size:14px;line-height:16px;font-weight:normal;color:#222;letter-spacing:0.35px;">Legend</div>
<div class="t" style="left:175.7px;top:754.15px;font-size:14px;line-height:16px;font-weight:normal;color:#222;letter-spacing:0.3px;">Items</div>
<div style="left:228.3px;top:750.8px;width:119.59999999999997px;height:28.200000000000045px;background:#f6f6f6;border:1px solid #e8e8e8;border-radius:2px;box-sizing:border-box"></div>
<svg style="position:absolute;left:231.3px;top:758.0px;overflow:visible" width="11" height="14" viewBox="0 0 11 14"><path d="M0.1 1.9 H8.7 M0.1 5.1 H8.7 M6.4 5.1 Q6.2 8 1.2 8.1 L7.2 12.8" fill="none" stroke="#0a0a0a" stroke-width="1.8"/><path d="M2.5 1.9 Q6.5 2.2 6.4 5.1" fill="none" stroke="#0a0a0a" stroke-width="1.6"/></svg>
<div class="t" style="left:245.5px;top:756.96px;font-size:16px;line-height:18px;font-weight:bold;color:#0a0a0a;letter-spacing:0.6px;;-webkit-text-stroke:0.08px currentColor">1000.00</div>
<div class="t" style="left:364.6px;top:754.15px;font-size:14px;line-height:16px;font-weight:normal;color:#222;letter-spacing:0.3px;">Labor</div>
<div style="left:420.4px;top:750.8px;width:119.20000000000005px;height:28.200000000000045px;background:#f6f6f6;border:1px solid #e8e8e8;border-radius:2px;box-sizing:border-box"></div>
<svg style="position:absolute;left:423.4px;top:758.0px;overflow:visible" width="11" height="14" viewBox="0 0 11 14"><path d="M0.1 1.9 H8.7 M0.1 5.1 H8.7 M6.4 5.1 Q6.2 8 1.2 8.1 L7.2 12.8" fill="none" stroke="#0a0a0a" stroke-width="1.8"/><path d="M2.5 1.9 Q6.5 2.2 6.4 5.1" fill="none" stroke="#0a0a0a" stroke-width="1.6"/></svg>
<div class="t" style="left:437.59999999999997px;top:756.96px;font-size:16px;line-height:18px;font-weight:bold;color:#0a0a0a;letter-spacing:0.6px;;-webkit-text-stroke:0.08px currentColor">40100.00</div>
<div class="t" style="left:549.6px;top:754.15px;font-size:14px;line-height:16px;font-weight:normal;color:#222;letter-spacing:0.3px;">Subtotal</div>
<div style="left:623.7px;top:750.8px;width:120.29999999999995px;height:28.200000000000045px;background:#f6f6f6;border:1px solid #e8e8e8;border-radius:2px;box-sizing:border-box"></div>
<svg style="position:absolute;left:626.7px;top:758.0px;overflow:visible" width="11" height="14" viewBox="0 0 11 14"><path d="M0.1 1.9 H8.7 M0.1 5.1 H8.7 M6.4 5.1 Q6.2 8 1.2 8.1 L7.2 12.8" fill="none" stroke="#0a0a0a" stroke-width="1.8"/><path d="M2.5 1.9 Q6.5 2.2 6.4 5.1" fill="none" stroke="#0a0a0a" stroke-width="1.6"/></svg>
<div class="t" style="left:640.9000000000001px;top:756.96px;font-size:16px;line-height:18px;font-weight:bold;color:#0a0a0a;letter-spacing:0.6px;;-webkit-text-stroke:0.08px currentColor">41100.00</div>
<div class="t" style="left:753.8px;top:754.15px;font-size:14px;line-height:16px;font-weight:normal;color:#222;letter-spacing:0.3px;">Tax</div>
<div style="left:797.9px;top:750.8px;width:119.89999999999998px;height:28.200000000000045px;background:#f6f6f6;border:1px solid #e8e8e8;border-radius:2px;box-sizing:border-box"></div>
<svg style="position:absolute;left:800.9px;top:758.0px;overflow:visible" width="11" height="14" viewBox="0 0 11 14"><path d="M0.1 1.9 H8.7 M0.1 5.1 H8.7 M6.4 5.1 Q6.2 8 1.2 8.1 L7.2 12.8" fill="none" stroke="#0a0a0a" stroke-width="1.8"/><path d="M2.5 1.9 Q6.5 2.2 6.4 5.1" fill="none" stroke="#0a0a0a" stroke-width="1.6"/></svg>
<div style="left:970.6px;top:751.5px;width:105.69999999999993px;height:27.5px;background:#fff;border:1px solid #e4e4e4;border-radius:3px;box-sizing:border-box"></div>
<div class="t" style="left:970.6px;width:105.69999999999993px;text-align:center;top:757.76px;font-size:16px;line-height:18px;font-weight:bold;color:#0a0a0a;letter-spacing:0.35px;;-webkit-text-stroke:0.08px currentColor">Total</div>
<div style="left:1081px;top:750.8px;width:119.59999999999991px;height:28.200000000000045px;background:#f6f6f6;border:1px solid #e8e8e8;border-radius:2px;box-sizing:border-box"></div>
<svg style="position:absolute;left:1084px;top:758.0px;overflow:visible" width="11" height="14" viewBox="0 0 11 14"><path d="M0.1 1.9 H8.7 M0.1 5.1 H8.7 M6.4 5.1 Q6.2 8 1.2 8.1 L7.2 12.8" fill="none" stroke="#0a0a0a" stroke-width="1.8"/><path d="M2.5 1.9 Q6.5 2.2 6.4 5.1" fill="none" stroke="#0a0a0a" stroke-width="1.6"/></svg>
<div class="t" style="left:1098.2px;top:756.96px;font-size:16px;line-height:18px;font-weight:bold;color:#0a0a0a;letter-spacing:0.6px;;-webkit-text-stroke:0.08px currentColor">41100.00</div>
<div style="left:1232.7px;top:752.1px;width:25.899999999999864px;height:25.399999999999977px;background:#eef58c;border:1.2px solid #7a7a7a;border-radius:2px;box-sizing:border-box"></div>
<svg style="position:absolute;left:1232px;top:752px;overflow:visible" width="27" height="26" viewBox="0 0 27 26"><path d="M11.3 15.6 A5.1 5.1 0 1 1 17.1 15.6 L16.6 17.4 H11.8 Z M11.8 17.4 L12.3 20.2 Q12.5 21.2 13.5 21.2 H14.9 Q15.9 21.2 16.1 20.2 L16.6 17.4" fill="none" stroke="#1a1a1a" stroke-width="1.4"/><path d="M3.3 2.4 L5.8 5.4 M8 0.9 L9.2 2.8 M14.4 0.5 V2.8 M21.2 0.9 L20.4 2.8 M25.5 3.5 L22.3 6.5" stroke="#222" stroke-width="1.2"/></svg>
<div style="left:4px;top:791px;width:1912px;height:1px;background:#bdbdbd"></div>
<div style="left:4px;top:792px;width:1912px;height:2px;background:#7e7e7e"></div>
<div style="left:4px;top:794px;width:1912px;height:2px;background:#fbfbfb"></div>
<div style="left:4px;top:766px;width:54px;height:54px;border-radius:50%;background:rgba(248,190,150,0.55)"></div>
<div class="t" style="left:17.3px;top:781.22px;font-size:21px;line-height:24px;font-weight:bold;color:rgba(255,255,255,0.92);letter-spacing:0px;;-webkit-text-stroke:0.08px currentColor">V6</div>
<div style="left:2px;top:763px;width:59.5px;height:33px;border-top:1px solid rgba(200,200,200,0.35);border-right:1px solid rgba(200,200,200,0.35);box-sizing:border-box"></div>
<div style="left:6.3px;top:57.2px;width:40.7px;height:40.599999999999994px;background:#fff;border:1px solid #eaecef;border-radius:3px;box-sizing:border-box"></div>
<div style="left:48.6px;top:57.2px;width:34.9px;height:40.599999999999994px;background:#fff;border:1px solid #eaecef;border-radius:3px;box-sizing:border-box"></div>
<div style="left:100px;top:57.2px;width:40.5px;height:40.599999999999994px;background:#fff;border:1px solid #eaecef;border-radius:3px;box-sizing:border-box"></div>
<div style="left:142.2px;top:57.2px;width:40.400000000000006px;height:40.599999999999994px;background:#ecedf0;border:1px solid #e6e8eb;border-radius:2.5px;box-sizing:border-box"></div>
<div style="left:184.8px;top:57.2px;width:39.39999999999998px;height:40.599999999999994px;background:#fff;border:1px solid #eaecef;border-radius:3px;box-sizing:border-box"></div>
<div style="left:226.4px;top:57.2px;width:40.099999999999994px;height:40.599999999999994px;background:#fff;border:1px solid #eaecef;border-radius:3px;box-sizing:border-box"></div>
<div style="left:271.6px;top:57.2px;width:40.39999999999998px;height:40.599999999999994px;background:#fff;border:1px solid #eaecef;border-radius:3px;box-sizing:border-box"></div>
<div style="left:314px;top:57.2px;width:40.5px;height:40.599999999999994px;background:#fff;border:1px solid #eaecef;border-radius:3px;box-sizing:border-box"></div>
<div style="left:356px;top:57.2px;width:40.5px;height:40.599999999999994px;background:#fff;border:1px solid #eaecef;border-radius:3px;box-sizing:border-box"></div>
<div style="left:398px;top:57.2px;width:40.5px;height:40.599999999999994px;background:#fff;border:1px solid #eaecef;border-radius:3px;box-sizing:border-box"></div>
<div style="left:441.5px;top:57.2px;width:82.0px;height:40.599999999999994px;background:#fff;border:1px solid #eaecef;border-radius:3px;box-sizing:border-box"></div>
<div style="left:525.3px;top:57.2px;width:9.800000000000068px;height:40.599999999999994px;background:#fff;border:1px solid #eaecef;border-radius:3px;box-sizing:border-box"></div>
<div style="left:537.3px;top:57.2px;width:40.10000000000002px;height:40.599999999999994px;background:#fff;border:1px solid #eaecef;border-radius:3px;box-sizing:border-box"></div>
<div style="left:581.1px;top:57.2px;width:82.79999999999995px;height:40.599999999999994px;background:#ecedf0;border:1px solid #e6e8eb;border-radius:2.5px;box-sizing:border-box"></div>
<div style="left:665.5px;top:57.2px;width:10.899999999999977px;height:40.599999999999994px;background:#ecedf0;border:1px solid #e6e8eb;border-radius:2.5px;box-sizing:border-box"></div>
<div style="left:682.7px;top:57.2px;width:39.39999999999998px;height:40.599999999999994px;background:#fff;border:1px solid #eaecef;border-radius:3px;box-sizing:border-box"></div>
<div style="left:723.6px;top:57.2px;width:41.19999999999993px;height:40.599999999999994px;background:#ecedf0;border:1px solid #e6e8eb;border-radius:2.5px;box-sizing:border-box"></div>
<div style="left:767px;top:57.2px;width:39.39999999999998px;height:40.599999999999994px;background:#fff;border:1px solid #eaecef;border-radius:3px;box-sizing:border-box"></div>
<div style="left:808.6px;top:57.2px;width:33.799999999999955px;height:40.599999999999994px;background:#fff;border:1px solid #eaecef;border-radius:3px;box-sizing:border-box"></div>
<div style="left:843.5px;top:57.2px;width:12.100000000000023px;height:40.599999999999994px;background:#ecedf0;border:1px solid #e6e8eb;border-radius:2.5px;box-sizing:border-box"></div>
<div style="left:861px;top:57.2px;width:40.200000000000045px;height:40.599999999999994px;background:#fff;border:1px solid #eaecef;border-radius:3px;box-sizing:border-box"></div>
<div style="left:904.6px;top:57.2px;width:39.5px;height:40.599999999999994px;background:#fff;border:1px solid #eaecef;border-radius:3px;box-sizing:border-box"></div>
<div style="left:946.3px;top:57.2px;width:39.90000000000009px;height:40.599999999999994px;background:#fff;border:1px solid #eaecef;border-radius:3px;box-sizing:border-box"></div>
<div style="left:988px;top:57.2px;width:41px;height:40.599999999999994px;background:#ecedf0;border:1px solid #e6e8eb;border-radius:2.5px;box-sizing:border-box"></div>
<div style="left:1030.7px;top:57.2px;width:39.5px;height:40.599999999999994px;background:#fff;border:1px solid #eaecef;border-radius:3px;box-sizing:border-box"></div>
<div style="left:1072.3px;top:57.2px;width:39.90000000000009px;height:40.599999999999994px;background:#fff;border:1px solid #eaecef;border-radius:3px;box-sizing:border-box"></div>
<div style="left:1114.6px;top:57.2px;width:39.700000000000045px;height:40.599999999999994px;background:#fff;border:1px solid #eaecef;border-radius:3px;box-sizing:border-box"></div>
<div style="left:1156.7px;top:57.2px;width:39.399999999999864px;height:40.599999999999994px;background:#fff;border:1px solid #eaecef;border-radius:3px;box-sizing:border-box"></div>
<div style="left:1198.5px;top:57.2px;width:40.09999999999991px;height:40.599999999999994px;background:#fff;border:1px solid #eaecef;border-radius:3px;box-sizing:border-box"></div>
<div style="left:1282.3px;top:57.2px;width:40.700000000000045px;height:40.599999999999994px;background:#fff;border:1px solid #eaecef;border-radius:3px;box-sizing:border-box"></div>
<div style="left:1367.5px;top:57.2px;width:40.799999999999955px;height:40.599999999999994px;background:#fff;border:1px solid #eaecef;border-radius:3px;box-sizing:border-box"></div>
<svg style="position:absolute;left:0;top:0" width="1921" height="100" viewBox="0 0 1921 100"><path d="M36 81.5 V70.7 L29.4 61.4 H14.5 V92.5 H31" fill="none" stroke="#2a2a2a" stroke-width="2" stroke-linejoin="round" /><path d="M29.4 61.4 V70.7 H38.9" fill="none" stroke="#2a2a2a" stroke-width="1.8" stroke-linejoin="round" /><circle cx="37.1" cy="87.8" r="5.6" fill="#fff" stroke="#2a2a2a" stroke-width="1.8"/><path d="M37.1 85 V90.6 M34.3 87.8 H39.9" fill="none" stroke="#2a2a2a" stroke-width="1.6" stroke-linejoin="round" /><path d="M59.5 68.6 V65 Q59.5 63.4 61.1 63.4 H71.2 Q72.8 63.4 72.8 65 V68.6" fill="none" stroke="#2a2a2a" stroke-width="1.9" stroke-linejoin="round" /><path d="M58.6 82.5 H55.8 Q53.8 82.5 53.8 80.5 V70.8 Q53.8 68.8 55.8 68.8 H76.3 Q78.3 68.8 78.3 70.8 V80.5 Q78.3 82.5 76.3 82.5 H73.9" fill="none" stroke="#2a2a2a" stroke-width="1.9" stroke-linejoin="round" /><path d="M57.8 78 H74.5 M59.4 78 V90.3 H72.9 V78" fill="none" stroke="#2a2a2a" stroke-width="1.9" stroke-linejoin="round" /><path d="M63 82.2 H69.5 M63 86.2 H69.5 M71.6 73.3 H74" fill="none" stroke="#2a2a2a" stroke-width="1.4" stroke-linejoin="round" /><path d="M109.6 67 H126.7 L130.7 71.8 V88.5 H109.6 Z" fill="none" stroke="#2a2a2a" stroke-width="2.3" stroke-linejoin="round" /><path d="M114.7 67 V73.9 H124.9 V67" fill="none" stroke="#2a2a2a" stroke-width="2" stroke-linejoin="round" /><circle cx="120.2" cy="80.9" r="4.1" fill="none" stroke="#2a2a2a" stroke-width="2"/><path d="M155.3 88.5 L156.2 82.5 L165.4 66.1 Q166.3 64.9 167.6 65.6 L169.8 66.8 Q171 67.6 170.2 68.9 L161 85.1 Z M156.2 82.5 L161 85.1 M164.3 68.2 L168.9 70.8" fill="none" stroke="#8a8a8a" stroke-width="1.1" stroke-linejoin="round" /><path d="M192.5 65.6 L216.5 90 M216.5 65.6 L192.5 90" fill="none" stroke="#333" stroke-width="1.5" stroke-linejoin="round" /><circle cx="245.7" cy="76.1" r="9.2" fill="none" stroke="#1e1e1e" stroke-width="2.2"/><path d="M252.8 83.2 L258.4 89" fill="none" stroke="#1e1e1e" stroke-width="2.2" stroke-linejoin="round" stroke-linecap="round"/><path d="M295.3 64.4 H279.2 V85.4 H285" fill="none" stroke="#1e1e1e" stroke-width="2.4" stroke-linejoin="round" /><path d="M288.1 68.9 H304.3 V89.5 H288.1 Z" fill="none" stroke="#1e1e1e" stroke-width="2.4" stroke-linejoin="round" /><ellipse cx="296.1" cy="78.7" rx="2.9" ry="4.4" fill="none" stroke="#1e1e1e" stroke-width="2.3"/><circle cx="328.8" cy="85" r="3.1" fill="none" stroke="#505050" stroke-width="2"/><circle cx="339.3" cy="85" r="3.1" fill="none" stroke="#505050" stroke-width="2"/><path d="M328 66.5 L337.4 82 M340.2 66.5 L330.8 82" fill="none" stroke="#505050" stroke-width="1.7" stroke-linejoin="round" /><path d="M367.2 64.4 H377 Q379.5 64.4 379.5 66.9 V81.1 Q379.5 83.6 377 83.6 H367.2 Q364.7 83.6 364.7 81.1 V66.9 Q364.7 64.4 367.2 64.4 Z" fill="none" stroke="#1e1e1e" stroke-width="2.2" stroke-linejoin="round" /><path d="M379.5 69.3 H384.1 Q386.6 69.3 386.6 71.8 V86.5 Q386.6 89 384.1 89 H373 Q370.5 89 370.5 86.5 V83.6" fill="none" stroke="#1e1e1e" stroke-width="2.2" stroke-linejoin="round" /><path d="M412 67.5 H409 Q407.2 67.5 407.2 69.3 V89 Q407.2 90.8 409 90.8 H412" fill="none" stroke="#333" stroke-width="1.2" stroke-linejoin="round" /><path d="M421.5 67.5 Q422.8 67.5 422.8 69 V71" fill="none" stroke="#333" stroke-width="1.2" stroke-linejoin="round" /><path d="M412.1 65.2 H421.5 V68.2 H412.1 Z M416.8 63.2 V65" fill="none" stroke="#333" stroke-width="1.4" stroke-linejoin="round" /><path d="M412.1 70.7 H426.4 L430.5 74.8 V92.2 H412.1 Z" fill="#fff" stroke="#222" stroke-width="1.4" stroke-linejoin="round" /><path d="M426.4 70.7 V74.8 H430.5 Z" fill="#222" stroke="#222" stroke-width="1" stroke-linejoin="round" /><path d="M414.6 76.4 H428 M414.6 78.4 H428 M414.6 80.4 H428 M414.6 82.4 H428 M414.6 84.4 H428 M414.6 86.4 H428 M414.6 88.6 H423.5" fill="none" stroke="#444" stroke-width="0.9" stroke-linejoin="round" /><circle cx="468.1" cy="76.1" r="8.9" fill="none" stroke="#555" stroke-width="1.8"/><path d="M474.6 82.6 L479.4 87.3" fill="none" stroke="#555" stroke-width="2.2" stroke-linejoin="round" /><path d="M490.2 72.5 Q490 66 495.8 65.8 Q501.6 66 501.4 72.5 M489.2 72.5 H502.4 M494.8 66 V69 M496.8 66 V69" fill="none" stroke="#666" stroke-width="1.2" stroke-linejoin="round" /><path d="M491 73 Q491 78.6 495.8 78.6 Q500.6 78.6 500.6 73" fill="none" stroke="#666" stroke-width="1.2" stroke-linejoin="round" /><path d="M489 79.8 H502.5 Q504.9 79.8 504.9 84 Q504.9 88.5 502.5 88.5 H489 Q486.3 88.5 486.3 84 Q486.3 79.8 489 79.8 Z M491.5 80 V88.4 M500 80 V88.4 M489.2 80 V88.4 M502.3 80 V88.4" fill="none" stroke="#666" stroke-width="1" stroke-linejoin="round" /><path d="M527 75.5 L530.4 78.6 L533.8 75.5" fill="none" stroke="#444" stroke-width="2" stroke-linejoin="round" /><path d="M553 80.9 H546 Q543.1 80.9 543.1 78 V68.5 Q543.1 65.6 546 65.6 H567.2 Q570.1 65.6 570.1 68.5 V78 Q570.1 80.9 567.2 80.9 H566.5" fill="none" stroke="#333" stroke-width="2.4" stroke-linejoin="round" /><circle cx="560.3" cy="79.8" r="6" fill="none" stroke="#333" stroke-width="2.3"/><path d="M564.6 84.3 L569.7 89.8" fill="none" stroke="#333" stroke-width="2.4" stroke-linejoin="round" /><path d="M602.3 76.9 H616.2 M609.3 70 V83.8" fill="none" stroke="#888" stroke-width="2.3" stroke-linejoin="round" /><text x="620.4" y="82.8" font-family="Liberation Sans" font-size="17" fill="#8a8a8a" stroke="#8a8a8a" stroke-width="0.5" transform="translate(620.4 0) scale(0.8 1) translate(-620.4 0)">SR</text><path d="M667.3 75.3 L670.8 78.6 L674.3 75.3" fill="none" stroke="#979797" stroke-width="1.9" stroke-linejoin="round" /><path d="M705 76.1 L712.8 68.6 M706 67.9 H713.5 V75.3" fill="none" stroke="#111" stroke-width="2.6" stroke-linejoin="round" /><path d="M701 80.8 L693.2 88 M692.5 81 V88.2 H700.4" fill="none" stroke="#111" stroke-width="2.6" stroke-linejoin="round" /><path d="M731.8 64.8 H741.7 V74.9 H731.8 Z M747.1 64.8 H757.4 V74.9 H747.1 Z M747.1 80.6 H757.4 V90.9 H747.1 Z" fill="none" stroke="#888" stroke-width="1.1" stroke-linejoin="round" /><rect x="731.3" y="80.1" width="10.9" height="11.3" fill="#888"/><path d="M773 83.4 V67.3 Q773 64.5 775.8 64.5 H797.4 Q800.2 64.5 800.2 67.3 V80.6 Q800.2 83.4 797.4 83.4 H779 L773 88.9 Z" fill="none" stroke="#222" stroke-width="2.2" stroke-linejoin="round" /><path d="M778.5 71.9 H794 M778.5 76.9 H786.5" fill="none" stroke="#333" stroke-width="2" stroke-linejoin="round" /><path d="M817 66.7 H835.2 Q837.7 66.7 837.7 69.2 V86 Q837.7 88.5 835.2 88.5 H817 Q814.4 88.5 814.4 86 V69.2 Q814.4 66.7 817 66.7 Z M814.4 72.5 H837.7 M819.1 65 V68.5 M832.8 65 V68.5" fill="none" stroke="#333" stroke-width="2.3" stroke-linejoin="round" /><path d="M821 81 L824.6 84 L831.9 77" fill="none" stroke="#222" stroke-width="2.5" stroke-linejoin="round" /><path d="M846.3 75.6 L849.7 78.8 L853.1 75.6" fill="none" stroke="#979797" stroke-width="1.9" stroke-linejoin="round" /><path d="M868 70.9 L880.7 64.2 L893.4 70.9 L880.7 77.8 Z" fill="none" stroke="#333" stroke-width="1.8" stroke-linejoin="round" /><path d="M870.5 75 L868 76.6 Q867.5 77.6 868 78 L880.7 84.6 L893.4 78 Q893.9 77.6 893.4 76.6 L891 75" fill="none" stroke="#333" stroke-width="1.8" stroke-linejoin="round" /><path d="M870.5 81.5 L868 83.1 Q867.5 84.1 868 84.5 L880.7 91.2 L893.4 84.5 Q893.9 84.1 893.4 83.1 L891 81.5" fill="none" stroke="#333" stroke-width="1.8" stroke-linejoin="round" /><circle cx="924.1" cy="77.9" r="11.1" fill="none" stroke="#333" stroke-width="1.9"/><circle cx="919.3" cy="76.6" r="1.4" fill="#222"/><circle cx="927.9" cy="76.6" r="1.4" fill="#222"/><path d="M920.2 82.3 Q924.1 85.8 928 82.3" fill="none" stroke="#333" stroke-width="1.6" stroke-linejoin="round" /><path d="M957.4 89 V65.3 H976.3 L970.5 71.3 L976.3 77.2 H957.4" fill="none" stroke="#222" stroke-width="2.2" stroke-linejoin="round" /><path d="M995.5 74.6 H1005 V68.9 H1022.9 V86.8 H995.5 Z" fill="none" stroke="#888" stroke-width="1.8" stroke-linejoin="round" /><path d="M1016.5 77.5 V80.7 H1001" fill="none" stroke="#888" stroke-width="1.8" stroke-linejoin="round" /><path d="M999 80.7 L1002.5 78 V83.4 Z" fill="#888" stroke="#888" stroke-width="1" stroke-linejoin="round" /><path d="M1039 68.7 Q1041 64 1047 62.2 Q1053 60.8 1058 63.5 Q1062.5 66.5 1062.5 72.5 L1060.5 74.5" fill="none" stroke="#333" stroke-width="1.2" stroke-linejoin="round" /><path d="M1037.2 67.8 L1061.2 76.6 M1037.5 69.2 L1061 77.8 M1044 63.5 Q1047.5 66 1049 69.3 M1051 67.5 L1055.5 69" fill="none" stroke="#333" stroke-width="1.1" stroke-linejoin="round" /><path d="M1043 74.5 Q1040.5 76.5 1039.6 79.2 L1042 80.6 Q1041.2 82.4 1041.7 84 L1043.2 85.2 Q1042.8 86.6 1044 87.2 H1049.2 V92.2 H1060.8 L1057.8 84.2 L1059.2 78" fill="none" stroke="#333" stroke-width="1.2" stroke-linejoin="round" /><path d="M1055.5 82.6 L1057.8 84.2 M1045.5 76.7 L1046.2 77.6" fill="none" stroke="#333" stroke-width="1" stroke-linejoin="round" /><path d="M1078.7 83.8 V67.5 Q1078.7 64.5 1081.7 64.5 H1102.8 Q1105.8 64.5 1105.8 67.5 V80.8 Q1105.8 83.8 1102.8 83.8 H1084.8 L1078.7 88.8 Z" fill="none" stroke="#222" stroke-width="2.3" stroke-linejoin="round" /><ellipse cx="1093.1" cy="74.3" rx="4.1" ry="4.7" fill="none" stroke="#1a1a1a" stroke-width="2.1"/><path d="M1120.5 63.4 H1147.2 V89.8 H1120.5 Z M1120.5 70.8 H1147.2" fill="none" stroke="#333" stroke-width="2.1" stroke-linejoin="round" /><path d="M1123 67.3 H1129" fill="none" stroke="#555" stroke-width="1.3" stroke-linejoin="round" /><circle cx="1137.8" cy="67.3" r="0.9" fill="#555"/><circle cx="1141.1" cy="67.3" r="0.9" fill="#555"/><circle cx="1144.4" cy="67.3" r="0.9" fill="#555"/><text x="1133.9" y="84.6" font-family="Liberation Sans" font-weight="bold" font-size="12" text-anchor="middle" fill="#222">$</text><path d="M1173.2 66.4 A12 12 0 1 0 1185.3 78.2" fill="none" stroke="#333" stroke-width="1.9" stroke-linejoin="round" /><circle cx="1173.4" cy="66.2" r="1.4" fill="#333"/><path d="M1172.9 71.5 V78.2 L1179.2 83.8" fill="none" stroke="#333" stroke-width="1.8" stroke-linejoin="round" /><circle cx="1183.8" cy="70.1" r="6.2" fill="#fff" stroke="#333" stroke-width="1.6"/><text x="1183.8" y="74.3" font-family="Liberation Sans" font-weight="bold" font-size="10" text-anchor="middle" fill="#222">$</text><path d="M1204.5 68 H1221 V83.5 H1204.5 Z M1221 70.4 H1228.6 L1233.4 77.4 V83.5 H1221" fill="none" stroke="#333" stroke-width="1.5" stroke-linejoin="round" /><path d="M1223 72.5 H1227.5 L1229.5 75.5 H1223 Z" fill="none" stroke="#333" stroke-width="1.1" stroke-linejoin="round" /><text x="1213" y="78.6" font-family="Liberation Sans" font-weight="bold" font-size="10" text-anchor="middle" fill="#222">A</text><circle cx="1210.8" cy="84.5" r="3" fill="#444"/><circle cx="1226.7" cy="84.5" r="3" fill="#444"/><circle cx="1210.8" cy="84.5" r="1" fill="#ccc"/><circle cx="1226.7" cy="84.5" r="1" fill="#ccc"/><path d="M1301.3 63.3 H1310 L1304.3 71.7 H1310 L1295 90.4 L1298.4 77.1 H1295 Z" fill="none" stroke="#e23c3c" stroke-width="1.1" stroke-linejoin="round" /><path d="M1389.8 67.1 H1384 Q1378.3 67.1 1378.3 72.8 V82.6 Q1378.3 88.3 1384 88.3 H1389.8" fill="none" stroke="#555" stroke-width="2.2" stroke-linejoin="round" /><path d="M1382 77.6 H1393" fill="none" stroke="#555" stroke-width="1.8" stroke-linejoin="round" /><path d="M1392.2 73.5 L1397 77.6 L1392.2 81.7 Z" fill="#555" stroke="#555" stroke-width="1" stroke-linejoin="round" /></svg>
</body></html>
